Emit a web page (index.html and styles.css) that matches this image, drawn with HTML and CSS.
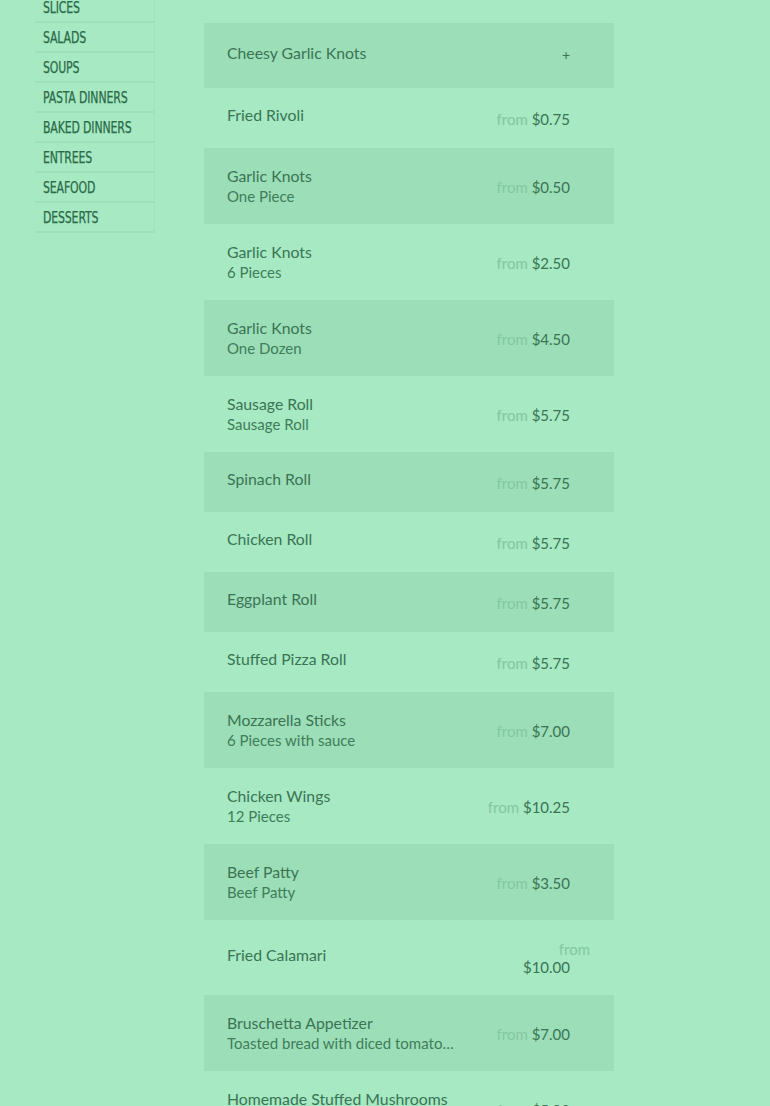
FILE: index.html
```html
<!DOCTYPE html>
<html>
<head>
<meta charset="utf-8">
<link rel="stylesheet" href="styles.css">
</head>
<body>
<div class="page">
  <nav class="sidebar">
    <a class="cat"><span>SLICES</span></a>
    <a class="cat"><span>SALADS</span></a>
    <a class="cat"><span>SOUPS</span></a>
    <a class="cat"><span>PASTA DINNERS</span></a>
    <a class="cat"><span>BAKED DINNERS</span></a>
    <a class="cat"><span>ENTREES</span></a>
    <a class="cat"><span>SEAFOOD</span></a>
    <a class="cat"><span>DESSERTS</span></a>
  </nav>
  <main class="menu">
    <div class="header">
      <span class="header-name">Cheesy Garlic Knots</span>
      <span class="plus">+</span>
    </div>
    <div class="item"><div class="info single"><div class="name">Fried Rivoli</div></div><div class="price"><span class="from">from</span> <span class="amt">$0.75</span></div></div>
    <div class="item dark"><div class="info"><div class="name">Garlic Knots</div><div class="desc">One Piece</div></div><div class="price"><span class="from">from</span> <span class="amt">$0.50</span></div></div>
    <div class="item"><div class="info"><div class="name">Garlic Knots</div><div class="desc">6 Pieces</div></div><div class="price"><span class="from">from</span> <span class="amt">$2.50</span></div></div>
    <div class="item dark"><div class="info"><div class="name">Garlic Knots</div><div class="desc">One Dozen</div></div><div class="price"><span class="from">from</span> <span class="amt">$4.50</span></div></div>
    <div class="item"><div class="info"><div class="name">Sausage Roll</div><div class="desc">Sausage Roll</div></div><div class="price"><span class="from">from</span> <span class="amt">$5.75</span></div></div>
    <div class="item dark"><div class="info single"><div class="name">Spinach Roll</div></div><div class="price"><span class="from">from</span> <span class="amt">$5.75</span></div></div>
    <div class="item"><div class="info single"><div class="name">Chicken Roll</div></div><div class="price"><span class="from">from</span> <span class="amt">$5.75</span></div></div>
    <div class="item dark"><div class="info single"><div class="name">Eggplant Roll</div></div><div class="price"><span class="from">from</span> <span class="amt">$5.75</span></div></div>
    <div class="item"><div class="info single"><div class="name">Stuffed Pizza Roll</div></div><div class="price"><span class="from">from</span> <span class="amt">$5.75</span></div></div>
    <div class="item dark"><div class="info"><div class="name">Mozzarella Sticks</div><div class="desc">6 Pieces with sauce</div></div><div class="price"><span class="from">from</span> <span class="amt">$7.00</span></div></div>
    <div class="item"><div class="info"><div class="name">Chicken Wings</div><div class="desc">12 Pieces</div></div><div class="price"><span class="from">from</span> <span class="amt">$10.25</span></div></div>
    <div class="item dark"><div class="info"><div class="name">Beef Patty</div><div class="desc">Beef Patty</div></div><div class="price"><span class="from">from</span> <span class="amt">$3.50</span></div></div>
    <div class="item"><div class="info single"><div class="name">Fried Calamari</div></div><div class="price wrap"><span class="from">from</span><br><span class="amt">$10.00</span></div></div>
    <div class="item dark"><div class="info"><div class="name">Bruschetta Appetizer</div><div class="desc">Toasted bread with diced tomatoes, garlic and basil</div></div><div class="price"><span class="from">from</span> <span class="amt">$7.00</span></div></div>
    <div class="item"><div class="info"><div class="name">Homemade Stuffed Mushrooms</div><div class="desc">Stuffed with breadcrumbs</div></div><div class="price"><span class="from">from</span> <span class="amt">$5.00</span></div></div>
  </main>
</div>
</body>
</html>
```
FILE: styles.css
```css
html, body {
  margin: 0;
  padding: 0;
  background: #a6e9c3;
  height: 1106px;
  overflow: hidden;
}
.page {
  display: flex;
  align-items: flex-start;
}
.sidebar {
  width: 120px;
  margin-left: 35px;
  margin-top: -7px;
  display: flex;
  flex-direction: column;
}
.cat {
  display: block;
  height: 28px;
  line-height: 30px;
  padding-left: 8px;
  border-bottom: 2px solid #9fe0bb;
  box-shadow: inset -1px 0 0 #a0e2bc;
  font-family: "DejaVu Sans Condensed", "DejaVu Sans", sans-serif;
  font-size: 16px;
  color: #2b6a47;
  white-space: nowrap;
}
.cat span {
  display: inline-block;
  transform: scaleX(0.76);
  transform-origin: left center;
  letter-spacing: -0.2px;
  -webkit-text-stroke: 0.25px #2b6a47;
}
.menu {
  width: 410px;
  margin-left: 49px;
  padding-top: 23px;
  display: flex;
  flex-direction: column;
  font-family: Lato, "Open Sans", sans-serif;
}
.header {
  height: 65px;
  box-sizing: border-box;
  background: #9cdeb8;
  display: flex;
  justify-content: space-between;
  padding: 20px 44px 0 23px;
}
.header-name {
  font-size: 15.8px;
  line-height: 20px;
  color: #3a7453;
}
.plus {
  font-size: 14px;
  line-height: 24px;
  color: #3a7453;
}
.item {
  display: flex;
  align-items: center;
  min-height: 60px;
  box-sizing: border-box;
  padding: 18px 24px 17px 23px;
}
.item.dark {
  background: #9cdeb8;
}
.info {
  flex: 1;
  min-width: 0;
}
.info.single {
  padding-bottom: 6px;
  margin-top: -1px;
}
.name {
  font-size: 15.8px;
  line-height: 20px;
  color: #3a7453;
  white-space: nowrap;
}
.desc {
  font-size: 15px;
  line-height: 21px;
  color: #3f7d59;
  white-space: nowrap;
  overflow: hidden;
  text-overflow: ellipsis;
  max-width: 232px;
}
.price {
  text-align: right;
  font-size: 15px;
  line-height: 18px;
  white-space: nowrap;
  padding-left: 10px;
}
.price.wrap {
  padding-top: 2px;
  padding-bottom: 2px;
}
.from {
  color: #83c7a0;
}
.amt {
  color: #3a7453;
  margin-right: 20px;
}
```
